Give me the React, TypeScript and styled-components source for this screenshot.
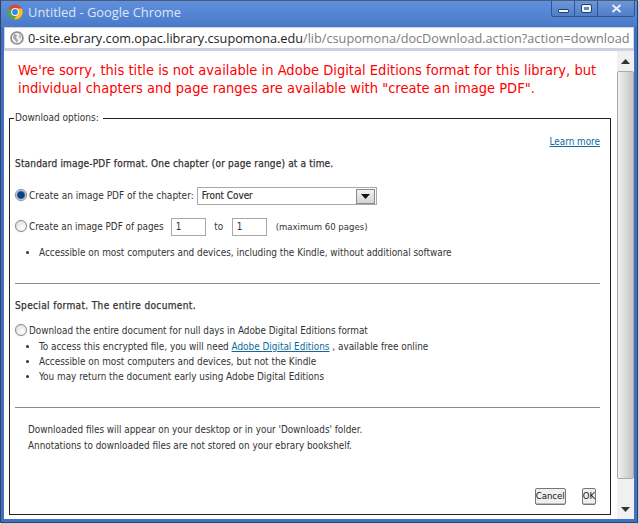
import { FC, ReactNode } from 'react';
import styled, { createGlobalStyle } from 'styled-components';

const FONT = '"DejaVu Sans Condensed", "DejaVu Sans", Verdana, sans-serif';
const TEXT_COLOR = '#333';

const GlobalStyle = createGlobalStyle`
  html, body {
    margin: 0;
    padding: 0;
    width: 639px;
    height: 524px;
    overflow: hidden;
    background: #fff;
  }
`;

const ChromeLogo: FC = () => (
  <svg width="16" height="16" viewBox="0 0 16 16">
    <circle cx="8" cy="8" r="7.6" fill="#d8473a" />
    <path d="M8 8 L1.4 4.2 A7.6 7.6 0 0 0 7.2 15.6 L10.8 9 Z" fill="#4aa84f" />
    <path d="M8 4.6 L14.8 4.6 A7.6 7.6 0 0 1 7.2 15.6 L10.8 9 Z" fill="#f2c318" />
    <circle cx="8" cy="8" r="3.9" fill="#f4f6fa" />
    <circle cx="8" cy="8" r="2.9" fill="#3f86dd" />
  </svg>
);

const GlobeIcon: FC = () => (
  <svg width="14" height="14" viewBox="0 0 14 14">
    <circle cx="7" cy="7" r="6" fill="#f0f0f0" stroke="#8c8c8c" strokeWidth="1.7" />
    <path d="M4 3 L7 4 L6 7 L8 9 L7 12 L5 9 L3 7 Z" fill="#a4a4a4" />
    <path d="M9 3 L11 5 L11 8 L9 6 Z" fill="#b4b4b4" />
  </svg>
);

const Radio: FC<{ checked?: boolean }> = ({ checked }) => <RadioDot $checked={checked} />;

const Bullet: FC<{ children: ReactNode }> = ({ children }) => <BulletItem>{children}</BulletItem>;

const App: FC = () => (
  <>
    <GlobalStyle />
    <Window>
      <TitleBar>
        <ChromeLogo />
        <TitleText>Untitled - Google Chrome</TitleText>
        <WindowControls>
          <ControlButton>
            <MinGlyph />
          </ControlButton>
          <ControlButton>
            <MaxGlyph />
          </ControlButton>
          <CloseButton>
            <svg width="11" height="9" viewBox="0 0 11 9">
              <path d="M1.5 1 L9.5 8 M9.5 1 L1.5 8" stroke="#e6edf8" strokeWidth="2" />
            </svg>
          </CloseButton>
        </WindowControls>
      </TitleBar>
      <AddressBar>
        <GlobeIcon />
        <UrlText>
          <UrlHost>0-site.ebrary.com.opac.library.csupomona.edu</UrlHost>
          /lib/csupomona/docDownload.action?action=download
        </UrlText>
      </AddressBar>
      <Viewport>
        <Page>
          <ErrorMessage>
            We're sorry, this title is not available in Adobe Digital Editions format for this library, but
            <br />
            individual chapters and page ranges are available with "create an image PDF".
          </ErrorMessage>
          <OptionsBox>
            <OptionsLegend>Download options:</OptionsLegend>
            <LearnRow>
              <LinkText>Learn more</LinkText>
            </LearnRow>
            <SectionHead $top={8} $spacing={0.18}>
              Standard image-PDF format. One chapter (or page range) at a time.
            </SectionHead>
            <ChapterRow>
              <Radio checked />
              <ChapterLabel>Create an image PDF of the chapter:</ChapterLabel>
              <ChapterSelect>
                <SelectValue>Front Cover</SelectValue>
                <SelectArrow>
                  <svg width="9" height="5" viewBox="0 0 9 5">
                    <path d="M0 0 H9 L4.5 5 Z" fill="#111" />
                  </svg>
                </SelectArrow>
              </ChapterSelect>
            </ChapterRow>
            <PagesRow>
              <Radio />
              <PagesLabel>Create an image PDF of pages</PagesLabel>
              <PageInput>1</PageInput>
              <ToLabel>to</ToLabel>
              <PageInput>1</PageInput>
              <MaxLabel>(maximum 60 pages)</MaxLabel>
            </PagesRow>
            <BulletList $top={8}>
              <Bullet>Accessible on most computers and devices, including the Kindle, without additional software</Bullet>
            </BulletList>
            <Rule $top={23} />
            <SectionHead $top={15} $spacing={0.36}>
              Special format. The entire document.
            </SectionHead>
            <DownloadRow>
              <Radio />
              <span>Download the entire document for null days in Adobe Digital Editions format</span>
            </DownloadRow>
            <BulletList $top={1}>
              <Bullet>
                To access this encrypted file, you will need <LinkText>Adobe Digital Editions</LinkText> , available free
                online
              </Bullet>
              <Bullet>Accessible on most computers and devices, but not the Kindle</Bullet>
              <Bullet>You may return the document early using Adobe Digital Editions</Bullet>
            </BulletList>
            <Rule $top={23} />
            <NoteBlock>
              Downloaded files will appear on your desktop or in your 'Downloads' folder.
              <br />
              Annotations to downloaded files are not stored on your ebrary bookshelf.
            </NoteBlock>
            <ButtonRow>
              <DialogButton>Cancel</DialogButton>
              <DialogButton>OK</DialogButton>
            </ButtonRow>
          </OptionsBox>
        </Page>
        <ScrollBar>
          <ScrollArrow>
            <svg width="9" height="5" viewBox="0 0 9 5">
              <path d="M0 5 H9 L4.5 0 Z" fill="#333" />
            </svg>
          </ScrollArrow>
          <ScrollThumb />
          <ScrollArrow>
            <svg width="9" height="5" viewBox="0 0 9 5">
              <path d="M0 0 H9 L4.5 5 Z" fill="#333" />
            </svg>
          </ScrollArrow>
        </ScrollBar>
      </Viewport>
    </Window>
  </>
);

const Window = styled.div`
  width: 638px;
  height: 523px;
  box-sizing: border-box;
  display: flex;
  flex-direction: column;
  background: #3f70c4;
  border: 1px solid #34435f;
  border-top-color: #4a5c7c;
  padding: 0 3px 3px 3px;
  font-family: ${FONT};
  font-stretch: condensed;
  box-shadow: 1px 1px 0 #c9cdd4;
`;

const TitleBar = styled.div`
  height: 26px;
  flex: none;
  display: flex;
  align-items: flex-start;
  box-sizing: border-box;
  background: linear-gradient(#6090dc, #4a79c8);
  margin: 0 -3px;
  padding: 3px 0 0 6px;
`;

const TitleText = styled.div`
  margin-left: 5px;
  color: #dbe6f7;
  font-family: "Open Sans", sans-serif;
  font-size: 12.9px;
  line-height: 17px;
  font-stretch: normal;
`;

const WindowControls = styled.div`
  margin-left: auto;
  margin-top: -3px;
  margin-right: 2px;
  display: flex;
  height: 15px;
  border: 1px solid #2f5690;
  border-top: none;
  border-radius: 0 0 3px 3px;
  overflow: hidden;
`;

const ControlButton = styled.div`
  width: 22px;
  display: flex;
  align-items: center;
  justify-content: center;
  background: linear-gradient(#6d97da, #4f7dc8);
  border-right: 1px solid #2f5690;
`;

const CloseButton = styled(ControlButton)`
  width: 36px;
  border-right: none;
`;

const MinGlyph = styled.div`
  width: 9px;
  height: 2px;
  margin-top: 5px;
  background: #f0f4fb;
  border: 1px solid #2c3f63;
  border-radius: 1px;
`;

const MaxGlyph = styled.div`
  width: 5px;
  height: 3px;
  border: 2px solid #f0f4fb;
  outline: 1px solid #2c3f63;
  border-radius: 1px;
`;

const AddressBar = styled.div`
  height: 24px;
  flex: none;
  box-sizing: border-box;
  display: flex;
  align-items: center;
  gap: 4px;
  background: #fff;
  border: 1px solid #c4d3ea;
  border-bottom: 3px solid #cdd3dc;
  padding: 0 0 0 5px;
  overflow: hidden;
  white-space: nowrap;
`;

const UrlText = styled.div`
  color: #7d7d7d;
  font-family: "Open Sans", sans-serif;
  font-size: 12.7px;
  line-height: 20px;
  font-stretch: normal;
`;

const UrlHost = styled.span`
  color: #1d1d1d;
`;

const Viewport = styled.div`
  flex: 1;
  min-height: 0;
  display: flex;
  background: #fff;
`;

const Page = styled.div`
  flex: 1;
  min-width: 0;
  padding: 10px 6px 0 4px;
`;

const ErrorMessage = styled.div`
  color: #ff0000;
  font-size: 14.55px;
  line-height: 18px;
  padding-left: 10px;
  white-space: nowrap;
`;

const OptionsBox = styled.fieldset`
  margin: 14px 0 0 1px;
  padding: 0 10px 0 5px;
  box-sizing: border-box;
  height: 404px;
  border: 1px solid #222;
  color: ${TEXT_COLOR};
  font-size: 9.85px;
  line-height: 14px;
`;

const OptionsLegend = styled.legend`
  padding: 0 4px 0 1px;
  margin-left: -1px;
  font-size: 10px;
`;

const LearnRow = styled.div`
  margin-top: 10px;
  text-align: right;
`;

const LinkText = styled.span`
  color: #0f6a9c;
  text-decoration: underline;
`;

const SectionHead = styled.div<{ $top?: number; $spacing?: number }>`
  margin-top: ${({ $top }) => $top ?? 9}px;
  font-size: 10px;
  letter-spacing: ${({ $spacing }) => $spacing ?? 0}px;
  -webkit-text-stroke: 0.25px ${TEXT_COLOR};
`;

const ChapterRow = styled.div`
  margin-top: 15px;
  display: flex;
  align-items: center;
  height: 20px;
`;

const PagesRow = styled.div`
  margin-top: 11px;
  display: flex;
  align-items: center;
  height: 20px;
`;

const DownloadRow = styled.div`
  margin-top: 10px;
  display: flex;
  align-items: center;
  height: 15px;
`;

const RadioDot = styled.span<{ $checked?: boolean }>`
  width: 12px;
  height: 12px;
  flex: none;
  box-sizing: border-box;
  margin: -2px 2px 0 0;
  border-radius: 50%;
  border: 1px solid #8f8f8f;
  box-shadow: 0 0 1px #aaa;
  background: ${({ $checked }) =>
    $checked
      ? 'radial-gradient(circle, #0d3f78 0 3px, #5d92c9 4px, #e8eef5 5px)'
      : 'radial-gradient(circle at 60% 65%, #fff, #d8d8d8)'};
`;

const ChapterLabel = styled.span`
  font-size: 10px;
`;

const ChapterSelect = styled.div`
  width: 180px;
  height: 18px;
  margin-left: 3px;
  box-sizing: border-box;
  display: flex;
  align-items: center;
  justify-content: space-between;
  border: 1px solid #a8a8a8;
  padding: 0 1px 0 4px;
  background: #fff;
`;

const SelectValue = styled.span`
  -webkit-text-stroke: 0.2px ${TEXT_COLOR};
`;

const SelectArrow = styled.span`
  width: 19px;
  height: 15px;
  display: flex;
  align-items: center;
  justify-content: center;
  background: linear-gradient(#f2f2f2, #d4d4d4);
  border: 1px solid #888;
  box-sizing: border-box;
`;

const PagesLabel = styled.span`
  margin-right: 7px;
`;

const PageInput = styled.div`
  width: 35px;
  height: 18px;
  box-sizing: border-box;
  border: 1px solid #a8a8a8;
  padding-left: 4px;
  line-height: 16px;
`;

const ToLabel = styled.span`
  width: 26px;
  text-align: center;
`;

const MaxLabel = styled.span`
  margin-left: 9px;
  font-size: 9.5px;
`;

const BulletList = styled.ul<{ $top: number }>`
  margin: ${({ $top }) => $top}px 0 0;
  padding: 0 0 0 24px;
`;

const BulletItem = styled.li`
  font-size: 9.9px;
  line-height: 15px;
  white-space: nowrap;
`;

const Rule = styled.div<{ $top: number }>`
  margin-top: ${({ $top }) => $top}px;
  height: 1px;
  background: #8c8c8c;
`;

const NoteBlock = styled.div`
  margin: 14px 0 0 13px;
  line-height: 16px;
`;

const ButtonRow = styled.div`
  margin: 34px 4px 0 0;
  display: flex;
  justify-content: flex-end;
  gap: 16px;
`;

const DialogButton = styled.div`
  height: 15px;
  padding: 0;
  line-height: 14px;
  font-size: 9.5px;
  color: #111;
  background: #efefef;
  border: 1px solid #777;
  border-radius: 2px;
  box-shadow: inset 0 -1px 0 #bbb;
`;

const ScrollBar = styled.div`
  width: 17px;
  flex: none;
  display: flex;
  flex-direction: column;
  background: #f0f0f0;
`;

const ScrollArrow = styled.div`
  height: 20px;
  flex: none;
  display: flex;
  align-items: center;
  justify-content: center;
`;

const ScrollThumb = styled.div`
  flex: 1;
  margin-bottom: 20px;
  border: 1px solid #a9a9a9;
  border-radius: 2px;
  background: linear-gradient(90deg, #f2f2f2, #dcdcdc 45%, #c4c4c4);
`;

export default App;
